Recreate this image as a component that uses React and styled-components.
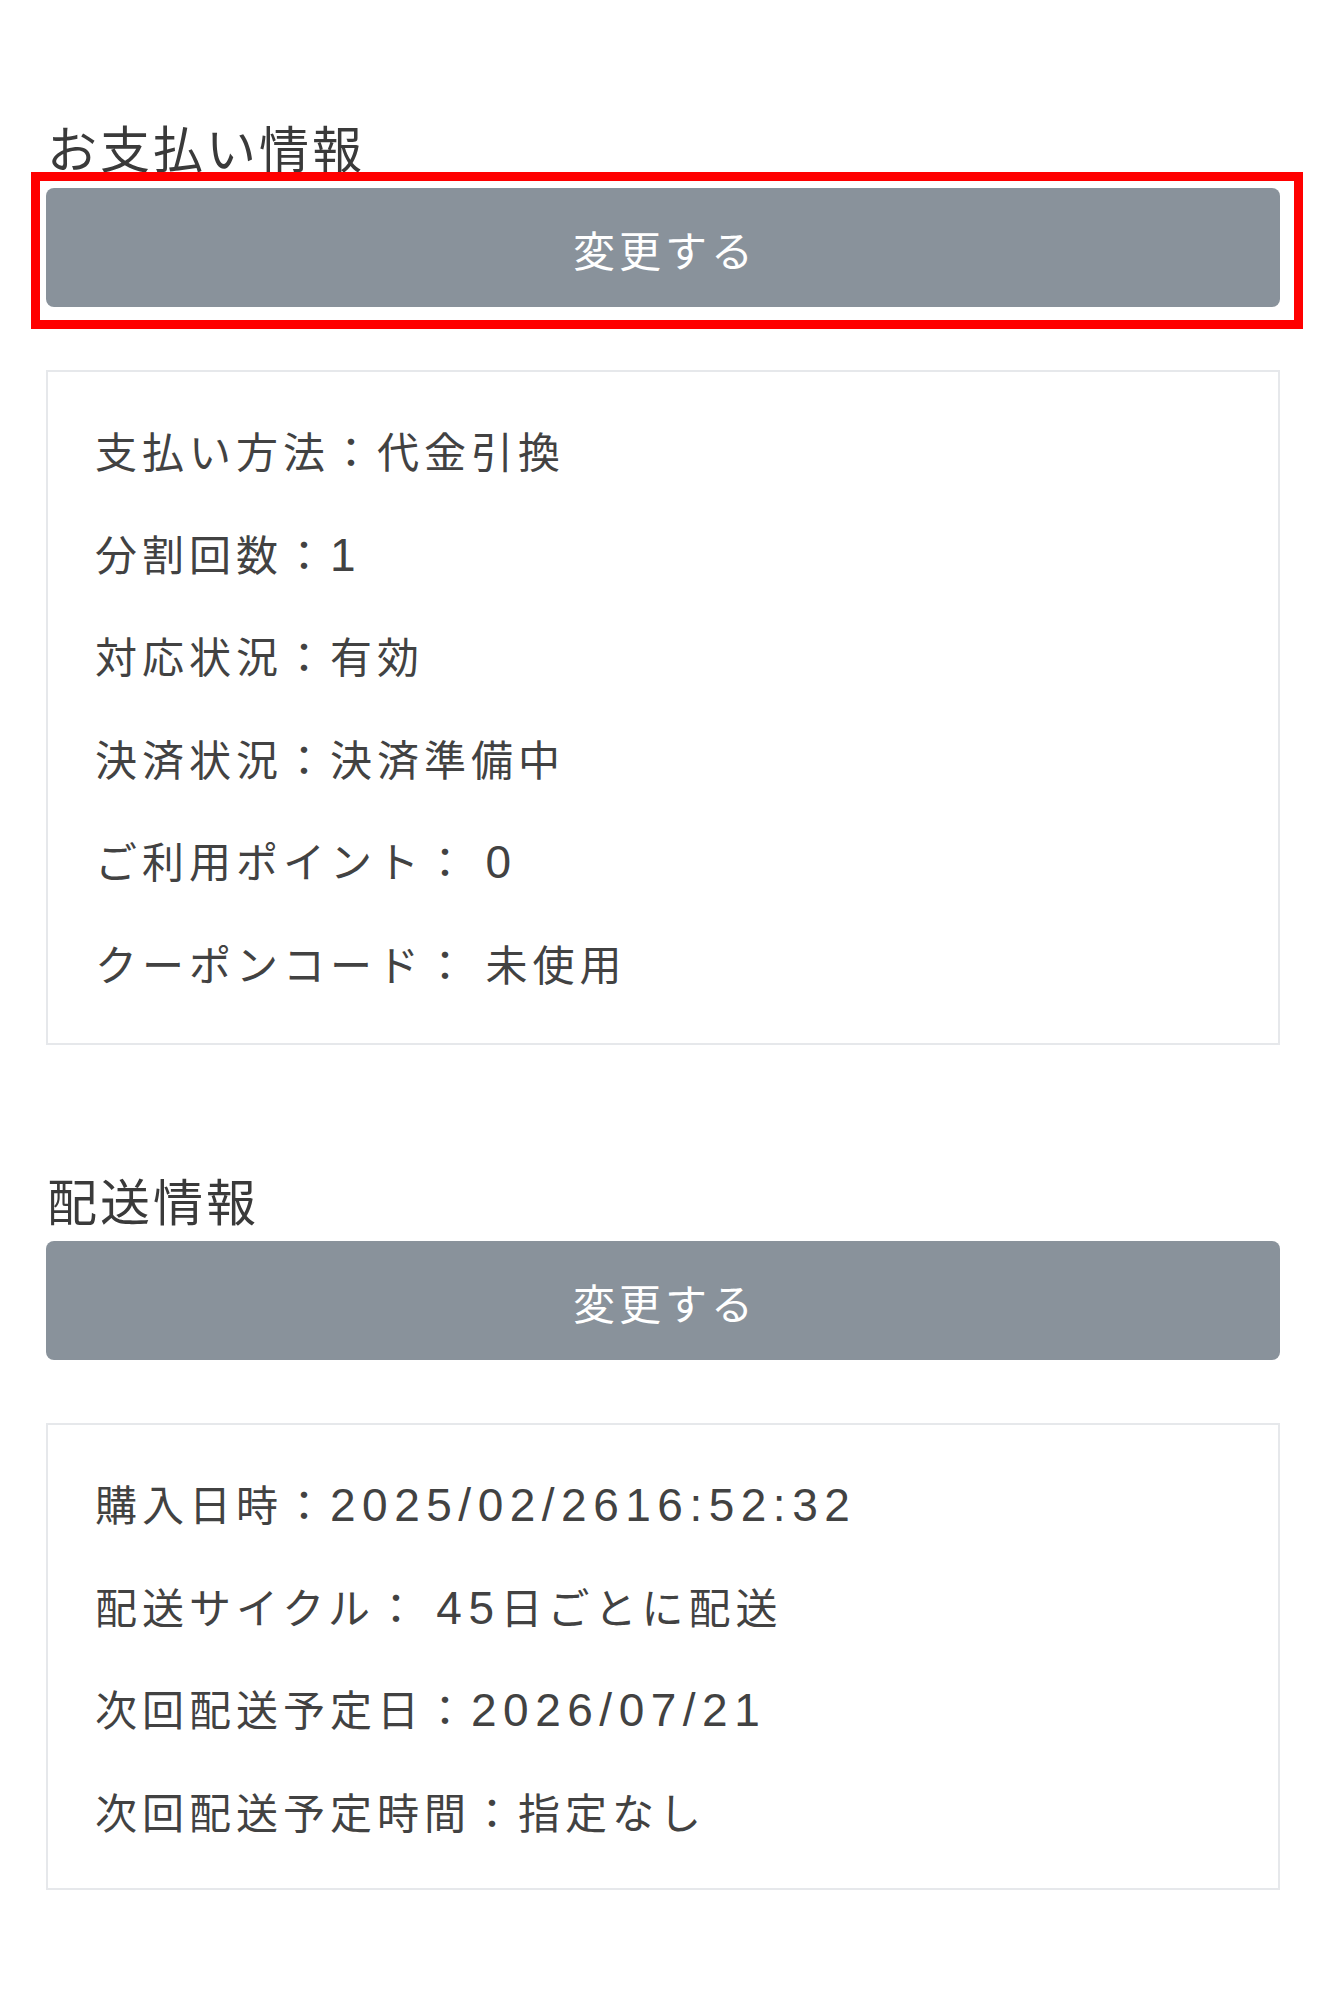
import React from "react";
import styled, { createGlobalStyle } from "styled-components";

const Global = createGlobalStyle`
  html, body { margin: 0; padding: 0; background: #ffffff; }
  body { font-family: "Noto Sans CJK JP", "Noto Sans", sans-serif; }
`;

const Page = styled.div`
  width: 1320px;
  min-height: 1998px;
  box-sizing: border-box;
  padding: 116px 40px 0 46px;
  display: flex;
  flex-direction: column;
`;

const Section = styled.section`
  display: flex;
  flex-direction: column;
  margin-bottom: ${(p) => p.$gapAfter || 0}px;
`;

const Heading = styled.h2`
  margin: 0 0 12px 1px;
  font-size: 50px;
  line-height: 60px;
  font-weight: 400;
  letter-spacing: 3px;
  color: #3a3a3a;
`;

const ButtonWrap = styled.div`
  position: relative;
  margin-bottom: 63px;
`;

const Highlight = styled.div`
  position: absolute;
  left: -15px;
  right: -23px;
  top: -16px;
  bottom: -22px;
  border: 9px solid #ff0000;
  pointer-events: none;
`;

const ChangeButton = styled.button`
  display: flex;
  align-items: center;
  justify-content: center;
  width: 100%;
  height: 119px;
  border: none;
  border-radius: 8px;
  background: #89929b;
  color: #ffffff;
  font-family: "Noto Sans CJK JP", "Noto Sans", sans-serif;
  font-size: 42px;
  font-weight: 400;
  letter-spacing: 4px;
  padding: 2px 0 0 4px;
  cursor: pointer;
`;

const Card = styled.div`
  border: 2px solid #e6e8eb;
  padding: ${(p) => p.$pt}px 0 ${(p) => p.$pb}px 47px;
  display: flex;
  flex-direction: column;
`;

const Row = styled.div`
  height: 102.5px;
  line-height: 102.5px;
  font-size: 42px;
  letter-spacing: 5px;
  color: #424242;
  white-space: pre;
`;

const Num = styled.span`
  font-family: "Liberation Sans", Arial, sans-serif;
  font-size: 46px;
  line-height: 1;
  letter-spacing: 6.5px;
`;

const payment = [
  "支払い方法：代金引換",
  "分割回数：1",
  "対応状況：有効",
  "決済状況：決済準備中",
  "ご利用ポイント： 0",
  "クーポンコード： 未使用",
];

const delivery = [
  "購入日時：2025/02/2616:52:32",
  "配送サイクル： 45日ごとに配送",
  "次回配送予定日：2026/07/21",
  "次回配送予定時間：指定なし",
];

function Line({ text }) {
  const parts = text.split(/([0-9/:]+)/);
  return (
    <Row>
      {parts.map((p, i) =>
        i % 2 === 1 ? <Num key={i}>{p}</Num> : <React.Fragment key={i}>{p}</React.Fragment>
      )}
    </Row>
  );
}

export default function App() {
  return (
    <>
      <Global />
      <Page>
        <Section $gapAfter={124}>
          <Heading>お支払い情報</Heading>
          <ButtonWrap>
            <ChangeButton>変更する</ChangeButton>
            <Highlight />
          </ButtonWrap>
          <Card $pt={27} $pb={29}>
            {payment.map((t) => (
              <Line key={t} text={t} />
            ))}
          </Card>
        </Section>
        <Section>
          <Heading>配送情報</Heading>
          <ButtonWrap>
            <ChangeButton>変更する</ChangeButton>
          </ButtonWrap>
          <Card $pt={27} $pb={26}>
            {delivery.map((t) => (
              <Line key={t} text={t} />
            ))}
          </Card>
        </Section>
      </Page>
    </>
  );
}
